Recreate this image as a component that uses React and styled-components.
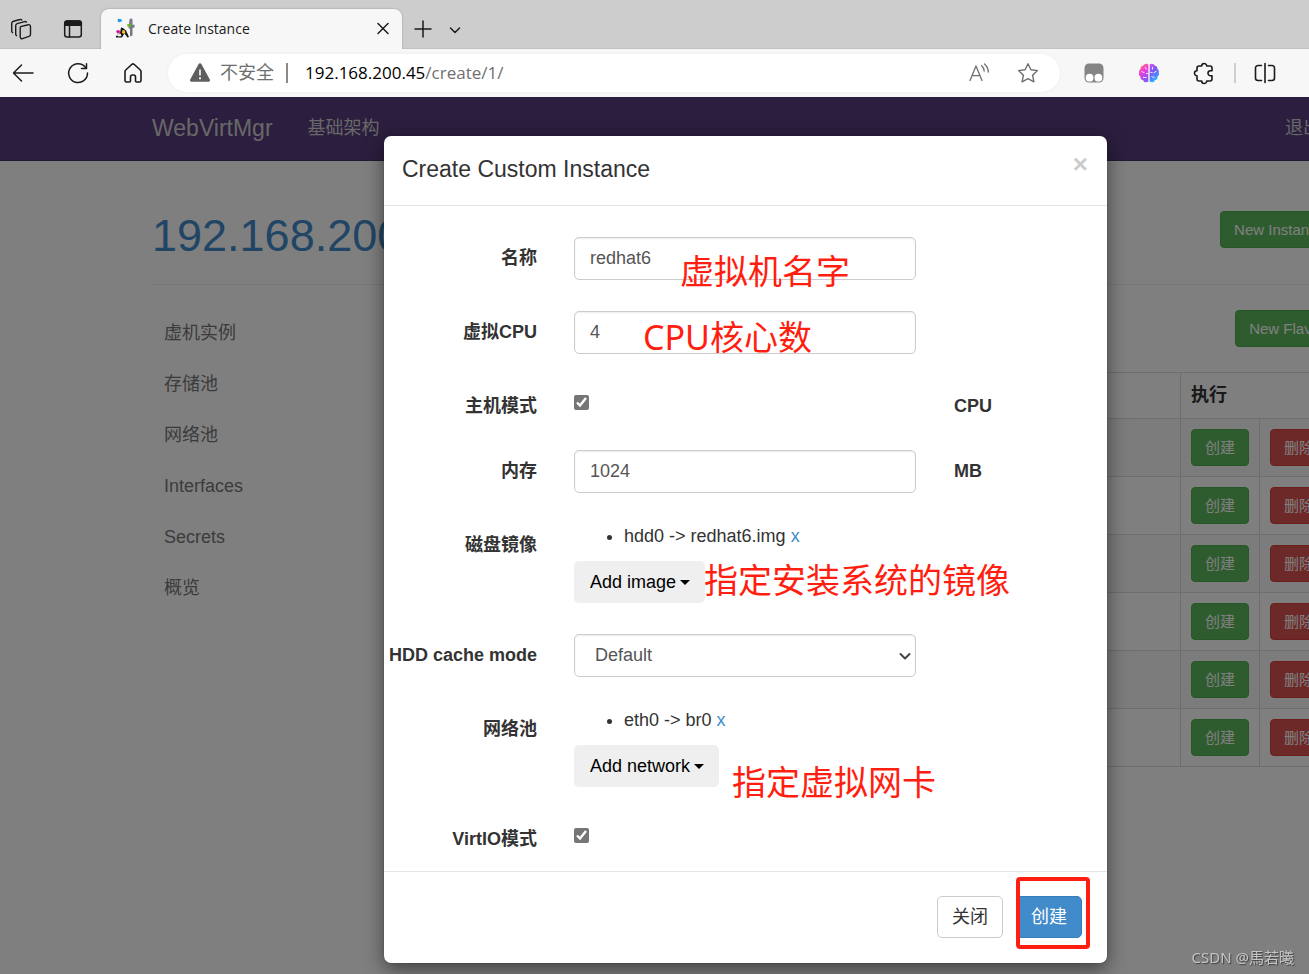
import React from "react";
import styled, { createGlobalStyle, css } from "styled-components";

const GlobalStyle = createGlobalStyle`
  *, *::before, *::after { box-sizing: border-box; }
  body {
    margin: 0;
    font-family: "Liberation Sans", "Noto Sans CJK SC", sans-serif;
    font-size: 18px;
    line-height: 25px;
    color: #333;
    background: #fff;
  }
  button, input, select { font: inherit; margin: 0; }
  a { color: #428bca; text-decoration: none; }
`;

const BLEED = "182px";

const Window = styled.div`
  min-height: 100vh;
  display: flex;
  flex-direction: column;
  overflow: hidden;
`;

/* ---------- browser chrome ---------- */

const uiFont = css`
  font-family: "Open Sans", "Noto Sans CJK SC", sans-serif;
`;

const TabStrip = styled.div`
  ${uiFont}
  height: 49px;
  display: flex;
  align-items: flex-end;
  background: #cdcdcd;
  border-bottom: 1px solid #c2c2c2;
`;

const IconButton = styled.button`
  width: 24px;
  height: 24px;
  padding: 0;
  border: 0;
  background: none;
  color: ${(p) => p.$color || "#1b1b1b"};
  display: flex;
  align-items: center;
  justify-content: center;
  flex: none;
  svg { display: block; }
`;

const StripTools = styled.div`
  display: flex;
  align-items: center;
  gap: ${(p) => p.$gap}px;
  height: 39px;
  padding-left: ${(p) => p.$pad}px;
`;

const Tab = styled.div`
  width: 301px;
  height: 40px;
  margin: 0 0 -1px 16px;
  padding: 0 7px 2px 14px;
  display: flex;
  align-items: center;
  gap: 13px;
  background: #f7f7f7;
  border-radius: 8px 8px 0 0;
  box-shadow: 0 0 2px rgba(0, 0, 0, 0.3);
  clip-path: inset(-4px -4px 0 -4px);
  font-size: 14px;
  color: #1b1b1b;
`;

const TabTitle = styled.span`
  flex: 1;
`;

const Toolbar = styled.div`
  ${uiFont}
  height: 48px;
  display: flex;
  align-items: center;
  padding: 0 32px 0 11px;
  background: #f7f7f7;
`;

const ToolGroup = styled.div`
  display: flex;
  align-items: center;
  gap: 31px;
`;

const AddressBar = styled.div`
  flex: 1;
  height: 38px;
  margin: 0 22px 0 23px;
  padding: 0 20px 1px 20px;
  display: flex;
  align-items: center;
  background: #fff;
  border-radius: 19px;
  box-shadow: 0 0 3px rgba(0, 0, 0, 0.06);
  font-size: 17px;
  color: #6f6f6f;
`;

const Security = styled.span`
  font-size: 18px;
  margin-left: 8px;
`;

const Divider = styled.span`
  width: 2px;
  height: 20px;
  background: ${(p) => p.$color};
  margin: 0 ${(p) => p.$right}px 0 ${(p) => p.$left}px;
`;

const Url = styled.span`
  flex: 1;
  b { font-weight: 400; color: #000; }
`;

const AddressTools = styled.div`
  display: flex;
  gap: 25px;
`;

/* ---------- page ---------- */

const Viewport = styled.div`
  flex: 1;
  display: grid;
  grid-template-columns: calc(100% + ${BLEED});
  overflow: hidden;
`;

const Page = styled.div`
  grid-area: 1 / 1;
  background: #fff;
`;

const Backdrop = styled.div`
  grid-area: 1 / 1;
  z-index: 1;
  background: rgba(0, 0, 0, 0.5);
`;

const Navbar = styled.nav`
  height: 64px;
  padding: 0 170px 0 152px;
  display: flex;
  align-items: center;
  background: #563d7c;
  border-bottom: 1px solid #463265;
`;

const Brand = styled.a`
  font-size: 23px;
  color: #d0d0d0;
  margin-right: 35px;
`;

const NavLink = styled.a`
  color: #d0d0d0;
  margin-left: ${(p) => (p.$end ? "auto" : "0")};
`;

const Container = styled.div`
  padding: 50px 152px 0;
`;

const PageHeader = styled.header`
  display: flex;
  justify-content: space-between;
  align-items: flex-start;
  padding-bottom: 23px;
  border-bottom: 1px solid #eee;
`;

const PageTitle = styled.h1`
  margin: 0;
  font-size: 45px;
  line-height: 50px;
  font-weight: 400;
`;

const SmallButton = styled.button`
  height: 37px;
  padding: 0 13px;
  border: 1px solid ${(p) => (p.$danger ? "#d43f3a" : "#4cae4c")};
  border-radius: 4px;
  background: ${(p) => (p.$danger ? "#d9534f" : "#5cb85c")};
  color: #fff;
  font-size: 15px;
  line-height: 22px;
  white-space: nowrap;
  display: block;
`;

const Columns = styled.div`
  display: grid;
  grid-template-columns: 1fr 3fr;
  gap: 38px;
  padding-top: 23px;
`;

const Sidebar = styled.ul`
  list-style: none;
  margin: 0;
  padding: 0;
`;

const SidebarLink = styled.a`
  display: block;
  padding: 13px 12px;
  color: #777;
`;

const Main = styled.main`
  padding-top: 2px;
  display: flex;
  flex-direction: column;
  align-items: flex-end;
  gap: 25px;
`;

const FlavorTable = styled.table`
  width: 100%;
  border-collapse: collapse;
  th, td {
    border: 1px solid #ddd;
    padding: 10px;
    text-align: left;
  }
  td:nth-last-child(-n + 2) { width: 78px; }
  tbody tr:nth-child(odd) td { background: #f9f9f9; }
`;

/* ---------- modal ---------- */

const ModalLayer = styled.div`
  grid-area: 1 / 1;
  z-index: 2;
  padding: 39px 0 11px;
  display: flex;
  justify-content: center;
  align-items: flex-start;
`;

const Modal = styled.section`
  position: relative;
  width: 723px;
  background: #fff;
  border-radius: 7px;
  box-shadow: 0 6px 19px rgba(0, 0, 0, 0.5), 0 0 1px rgba(0, 0, 0, 0.6);
`;

const ModalHeader = styled.header`
  display: flex;
  justify-content: space-between;
  align-items: flex-start;
  height: 70px;
  padding: 16px 19px 0 18px;
  border-bottom: 1px solid #e5e5e5;
`;

const ModalTitle = styled.h2`
  margin: 0;
  font-size: 23px;
  line-height: 34px;
  font-weight: 400;
`;

const Close = styled.button`
  padding: 0;
  border: 0;
  background: none;
  font-size: 26px;
  line-height: 24px;
  font-weight: 700;
  color: #ccc;
`;

const Form = styled.form`
  display: flex;
  flex-direction: column;
  gap: 31px;
  padding: 31px 0 19px;
`;

const Row = styled.div`
  display: grid;
  grid-template-columns: 153px 342px 1fr;
  column-gap: 37px;
  align-items: start;
`;

const labelText = css`
  font-weight: 700;
  padding-top: 9px;
  white-space: nowrap;
`;

const Label = styled.label`
  ${labelText}
  justify-self: end;
`;

const Suffix = styled.span`
  ${labelText}
  padding-left: 1px;
`;

const field = css`
  width: 100%;
  height: 43px;
  border: 1px solid #ccc;
  border-radius: 5px;
  background-color: #fff;
  color: #555;
  box-shadow: inset 0 1px 2px rgba(0, 0, 0, 0.08);
`;

const TextInput = styled.input`
  ${field}
  padding: 0 15px;
`;

const SelectBox = styled.div`
  position: relative;
  color: #444;
  svg {
    position: absolute;
    top: 10px;
    right: -1px;
    pointer-events: none;
  }
`;

const Select = styled.select`
  ${field}
  appearance: none;
  display: block;
  padding: 0 32px 0 20px;
`;

const Check = styled.input`
  display: block;
  width: 15px;
  height: 15px;
  margin: 10px 0 0;
  accent-color: #767676;
`;

const ItemList = styled.ul`
  margin: 0 0 12px;
  padding-left: 50px;
`;

const DropButton = styled.button`
  height: 42px;
  padding: 0 15px 0 16px;
  border: 0;
  border-radius: 5px;
  background: #efefef;
  color: #000;
  display: flex;
  align-items: center;
  gap: 4px;
`;

const Caret = styled.span`
  border: 5px solid transparent;
  border-top-color: currentColor;
  border-bottom: 0;
`;

const ModalFooter = styled.footer`
  display: flex;
  justify-content: flex-end;
  gap: 13px;
  padding: 24px 25px 25px;
  border-top: 1px solid #e5e5e5;
`;

const FooterButton = styled.button`
  height: 42px;
  padding: 0 14px;
  border: 1px solid ${(p) => (p.$primary ? "#357ebd" : "#ccc")};
  border-radius: 5px;
  background: ${(p) => (p.$primary ? "#428bca" : "#fff")};
  color: ${(p) => (p.$primary ? "#fff" : "#333")};
`;

/* red callouts drawn over the dialog */
const Note = styled.span`
  position: absolute;
  left: ${(p) => p.$x}px;
  top: ${(p) => p.$y}px;
  font-family: "Noto Sans", "Noto Sans CJK SC", sans-serif;
  font-size: 34px;
  line-height: 40px;
  color: #ff1e10;
  white-space: nowrap;
  pointer-events: none;
`;

const Highlight = styled.span`
  position: absolute;
  right: 17px;
  bottom: 14px;
  width: 74px;
  height: 72px;
  border: 4px solid #ff1e10;
  border-radius: 4px;
  pointer-events: none;
`;

const Watermark = styled.span`
  position: fixed;
  right: 15px;
  bottom: 6px;
  z-index: 3;
  font-family: "Noto Sans", "Noto Sans CJK TC", sans-serif;
  font-size: 15px;
  line-height: 22px;
  color: #c4c4c4;
  text-shadow: 1px 1px 1px rgba(0, 0, 0, 0.5);
`;

/* ---------- icons ---------- */

const Svg = ({ size = 24, w = 1.5, children }) => (
  <svg
    width={size}
    height={size}
    viewBox={`0 0 ${size} ${size}`}
    fill="none"
    stroke="currentColor"
    strokeWidth={w}
    strokeLinecap="round"
    strokeLinejoin="round"
    aria-hidden="true"
  >
    {children}
  </svg>
);

const WorkspacesIcon = () => (
  <Svg w={1.4}>
    <path d="M11.6 9.6l7.6-1.9a1.8 1.8 0 0 1 2.3 1.8v8a2 2 0 0 1-1.5 1.9l-6.500 2.200a1.800 1.800 0 0 1-2.300-1.700v-8.500a1.900 1.900 0 0 1 .4-1.800z" />
    <path d="M7.500 18.600a1.700 1.700 0 0 1-.8-1.500V8.500a2 2 0 0 1 1.500-1.900l7.500-2a1.800 1.800 0 0 1 1.700.500" />
    <path d="M3.600 15.600a1.700 1.700 0 0 1-.9-1.500V6.600a2.400 2.400 0 0 1 1.800-2.300l6.500-1.800a1.800 1.800 0 0 1 1.800.4" />
  </Svg>
);

const VerticalTabsIcon = () => (
  <Svg w={1.5}>
    <rect x="3.700" y="4" width="16.600" height="16" rx="2.500" />
    <path d="M3.700 8.200V6.500A2.500 2.500 0 0 1 6.200 4h11.600a2.500 2.500 0 0 1 2.500 2.500v1.700z" fill="currentColor" />
    <path d="M8.500 8.500V20" />
  </Svg>
);

const Favicon = () => (
  <svg width="20" height="20" viewBox="0 0 20 20" aria-hidden="true">
    <path d="M14.500 1.500c1-1.500 3-1 3 .5v5l2-.5v3l-2 .5v7.500l-2.500 1V11l-1.500-1z" fill="#777986" />
    <path d="M3 .8l3.500.4.5 2-3 1-1.500-1z" fill="#1b9bea" />
    <path d="M12 6.500l2.500-1L16 7l-1 2-2.500-.5z" fill="#66bd17" />
    <path d="M6 9.500l2 .5 3 2.500L14 19l-1.500.5-3-4-1 1.500-1.500 2.500H1V18l4-3z" fill="#171717" />
    <path d="M1.500 17l4-1.500 1 2.500-3 .5z" fill="#f7f7f7" />
    <path d="M7.500 12l2 .2 1 2.300-1.500 1.500-2-1z" fill="#ffc928" />
    <path d="M1 13l2-1 2 .8-.3 2.200-2.500.5z" fill="#e0118d" />
  </svg>
);

const CrossIcon = () => (
  <Svg><path d="M7 7.500l10 10M17 7.500l-10 10" /></Svg>
);
const PlusIcon = () => (
  <Svg><path d="M12 4v16M4 12h16" /></Svg>
);
const ChevronIcon = () => (
  <Svg><path d="M7.500 11l4.500 4.500 4.500-4.500" /></Svg>
);
const SelectChevron = () => (
  <Svg w={2}><path d="M7.500 10l4.500 4.500 4.500-4.500" /></Svg>
);
const BackIcon = () => (
  <Svg><path d="M22 12H3M10.500 4L2.500 12l8 8" /></Svg>
);
const ReloadIcon = () => (
  <Svg>
    <path d="M19.600 6.500A9.400 9.400 0 1 0 21.500 12" />
    <path d="M20.500 2.800v4.700h-5" />
  </Svg>
);
const HomeIcon = () => (
  <Svg w={1.6}>
    <path d="M4 10.500a2 2 0 0 1 .7-1.500l6-5.500a2 2 0 0 1 2.600 0l6 5.500a2 2 0 0 1 .7 1.500V19.500a1.500 1.500 0 0 1-1.500 1.500H15.500a1 1 0 0 1-1-1v-4a2 2 0 0 0-2-2h-1a2 2 0 0 0-2 2v4a1 1 0 0 1-1 1H5.500A1.500 1.500 0 0 1 4 19.500z" />
  </Svg>
);
const WarningIcon = () => (
  <svg width="24" height="24" viewBox="0 0 24 24" aria-hidden="true">
    <path d="M10.500 3.200a1.700 1.700 0 0 1 3 0l8.300 15.300a1.500 1.500 0 0 1-1.300 2.300h-17a1.500 1.500 0 0 1-1.300-2.300z" fill="#5f5f5f" />
    <path d="M12 8.500v6" stroke="#fff" strokeWidth="1.600" />
    <circle cx="12" cy="17.300" r="1.100" fill="#fff" />
  </svg>
);
const ReadAloudIcon = () => (
  <Svg w={1.3}>
    <path d="M3 19.500L9 5l6 14.500M5 14.700h8" />
    <path d="M14.500 4.500c1.700 1.500 2.600 3.300 2.700 5.500M17.500 3c2.300 2 3.700 4.700 3.800 8" />
  </Svg>
);
const StarIcon = () => (
  <Svg w={1.4}>
    <path d="M12 2.700l2.900 6.100 6.600.8-4.900 4.600 1.300 6.700-5.900-3.300-5.900 3.300 1.300-6.700L2.500 9.600l6.600-.8z" />
  </Svg>
);
const MonkeyIcon = () => (
  <svg width="24" height="24" viewBox="0 0 24 24" aria-hidden="true">
    <rect x="2.500" y="2.500" width="19" height="19" rx="4.500" fill="#858585" />
    <circle cx="7.600" cy="16.700" r="3.900" fill="#fff" />
    <circle cx="16.400" cy="16.700" r="3.900" fill="#fff" />
  </svg>
);
const BrainIcon = () => (
  <svg width="24" height="24" viewBox="0 0 24 24" aria-hidden="true">
    <defs>
      <linearGradient id="brainLeft" x1="0" y1="0" x2="0.4" y2="1">
        <stop offset="0" stopColor="#ff9b3d" />
        <stop offset="0.450" stopColor="#f73bd0" />
        <stop offset="1" stopColor="#8a55ff" />
      </linearGradient>
      <linearGradient id="brainRight" x1="0" y1="0" x2="0.4" y2="1">
        <stop offset="0" stopColor="#d455ed" />
        <stop offset="0.500" stopColor="#7658f5" />
        <stop offset="1" stopColor="#2cb3ff" />
      </linearGradient>
    </defs>
    <path d="M11.300 3.500v17c-2 1.500-4.700.8-5.200-1.500-2 0-3-1.600-2.500-3.300C2 14.500 1.500 12.800 2.300 11.500c-.5-1.500 0-2.600 1.200-3.300C3.300 6 4.500 4.700 6 4.700 7 2.600 9.700 2 11.300 3.500z" fill="url(#brainLeft)" />
    <path d="M12.700 3.500v17c2 1.500 4.700.8 5.200-1.500 2 0 3-1.600 2.500-3.300 1.600-1.200 2.100-2.900 1.300-4.200.5-1.500 0-2.600-1.200-3.300.2-2.200-1-3.500-2.500-3.500-1-2.100-3.700-2.700-5.300-1.200z" fill="url(#brainRight)" />
    <path d="M4.500 10.500l3 1.300M8 6l1.500 2.500M6 16.500h3.500M9 12.500h2M19.500 10l-3 2M15.500 6v2.500M14.500 15.500l3 1M13.500 11.500h2" stroke="#f7e8ff" strokeWidth="1" fill="none" />
  </svg>
);
const PuzzleIcon = () => (
  <Svg w={1.6}>
    <path d="M7 5h2.700a2.500 2.500 0 0 1 5 0H18a2 2 0 0 1 2 2v2.700h-1.500a2.500 2.500 0 0 0 0 5H20V18a2 2 0 0 1-2 2h-3.300a2.500 2.500 0 0 1-5 0H7a2 2 0 0 1-2-2v-3.300a2.500 2.500 0 0 1 0-5V7a2 2 0 0 1 2-2z" />
  </Svg>
);
const SplitIcon = () => (
  <Svg w={1.6}>
    <path d="M8.500 4.500H5A2.500 2.500 0 0 0 2.500 7v10A2.500 2.500 0 0 0 5 19.500h3.500M15.500 4.500H19A2.500 2.500 0 0 1 21.500 7v10a2.500 2.500 0 0 1-2.500 2.500h-3.500M12 2.500v19" />
  </Svg>
);

/* ---------- composition ---------- */

const sections = ["虚机实例", "存储池", "网络池", "Interfaces", "Secrets", "概览"];
const flavors = [1, 2, 3, 4, 5, 6];

const Browser = () => (
  <>
    <TabStrip>
      <StripTools $gap={28} $pad={9}>
        <IconButton aria-label="Workspaces"><WorkspacesIcon /></IconButton>
        <IconButton aria-label="Tab actions"><VerticalTabsIcon /></IconButton>
      </StripTools>
      <Tab>
        <Favicon />
        <TabTitle>Create Instance</TabTitle>
        <IconButton aria-label="Close tab"><CrossIcon /></IconButton>
      </Tab>
      <StripTools $gap={8} $pad={9}>
        <IconButton aria-label="New tab"><PlusIcon /></IconButton>
        <IconButton aria-label="Tab list"><ChevronIcon /></IconButton>
      </StripTools>
    </TabStrip>
    <Toolbar>
      <ToolGroup>
        <IconButton aria-label="Back"><BackIcon /></IconButton>
        <IconButton aria-label="Reload"><ReloadIcon /></IconButton>
        <IconButton aria-label="Home"><HomeIcon /></IconButton>
      </ToolGroup>
      <AddressBar>
        <WarningIcon />
        <Security>不安全</Security>
        <Divider $color="#8a8a8a" $left={12} $right={17} />
        <Url><b>192.168.200.45</b>/create/1/</Url>
        <AddressTools>
          <IconButton $color="#6f6f6f" aria-label="Read aloud"><ReadAloudIcon /></IconButton>
          <IconButton $color="#6f6f6f" aria-label="Favorite"><StarIcon /></IconButton>
        </AddressTools>
      </AddressBar>
      <ToolGroup>
        <IconButton aria-label="Scripts"><MonkeyIcon /></IconButton>
        <IconButton aria-label="Assistant"><BrainIcon /></IconButton>
        <IconButton aria-label="Extensions"><PuzzleIcon /></IconButton>
      </ToolGroup>
      <Divider $color="#cfcfcf" $left={18} $right={17} />
      <IconButton aria-label="Split screen"><SplitIcon /></IconButton>
    </Toolbar>
  </>
);

const HostPage = () => (
  <Page>
    <Navbar>
      <Brand href="#">WebVirtMgr</Brand>
      <NavLink href="#">基础架构</NavLink>
      <NavLink href="#" $end>退出</NavLink>
    </Navbar>
    <Container>
      <PageHeader>
        <PageTitle><a href="#">192.168.200.45</a></PageTitle>
        <SmallButton>New Instance</SmallButton>
      </PageHeader>
      <Columns>
        <Sidebar>
          {sections.map((s) => (
            <li key={s}><SidebarLink href="#">{s}</SidebarLink></li>
          ))}
        </Sidebar>
        <Main>
          <SmallButton>New Flavor</SmallButton>
          <FlavorTable>
            <thead>
              <tr><th /><th colSpan={2}>执行</th></tr>
            </thead>
            <tbody>
              {flavors.map((id) => (
                <tr key={id}>
                  <td />
                  <td><SmallButton>创建</SmallButton></td>
                  <td><SmallButton $danger>删除</SmallButton></td>
                </tr>
              ))}
            </tbody>
          </FlavorTable>
        </Main>
      </Columns>
    </Container>
  </Page>
);

const Devices = ({ id, item, action }) => (
  <div>
    <ItemList>
      <li>{item} <a href="#">x</a></li>
    </ItemList>
    <DropButton id={id} type="button">{action}<Caret /></DropButton>
  </div>
);

const CreateDialog = () => (
  <Modal role="dialog" aria-labelledby="dialog-title">
    <ModalHeader>
      <ModalTitle id="dialog-title">Create Custom Instance</ModalTitle>
      <Close type="button" aria-label="Close">×</Close>
    </ModalHeader>
    <Form id="create-form">
      <Row>
        <Label htmlFor="name">名称</Label>
        <TextInput id="name" defaultValue="redhat6" />
      </Row>
      <Row>
        <Label htmlFor="vcpu">虚拟CPU</Label>
        <TextInput id="vcpu" defaultValue="4" />
      </Row>
      <Row>
        <Label htmlFor="host-model">主机模式</Label>
        <Check id="host-model" type="checkbox" defaultChecked />
        <Suffix>CPU</Suffix>
      </Row>
      <Row>
        <Label htmlFor="memory">内存</Label>
        <TextInput id="memory" defaultValue="1024" />
        <Suffix>MB</Suffix>
      </Row>
      <Row>
        <Label htmlFor="images">磁盘镜像</Label>
        <Devices id="images" item="hdd0 -> redhat6.img" action="Add image" />
      </Row>
      <Row>
        <Label htmlFor="cache">HDD cache mode</Label>
        <SelectBox>
          <Select id="cache" defaultValue="default">
            <option value="default">Default</option>
          </Select>
          <SelectChevron />
        </SelectBox>
      </Row>
      <Row>
        <Label htmlFor="networks">网络池</Label>
        <Devices id="networks" item="eth0 -> br0" action="Add network" />
      </Row>
      <Row>
        <Label htmlFor="virtio">VirtIO模式</Label>
        <Check id="virtio" type="checkbox" defaultChecked />
      </Row>
    </Form>
    <ModalFooter>
      <FooterButton type="button">关闭</FooterButton>
      <FooterButton type="submit" form="create-form" $primary>创建</FooterButton>
    </ModalFooter>
    <Note $x={296} $y={115}>虚拟机名字</Note>
    <Note $x={259} $y={181}>CPU核心数</Note>
    <Note $x={320} $y={424}>指定安装系统的镜像</Note>
    <Note $x={348} $y={626}>指定虚拟网卡</Note>
    <Highlight />
  </Modal>
);

export default function App() {
  return (
    <Window>
      <GlobalStyle />
      <Browser />
      <Viewport>
        <HostPage />
        <Backdrop />
        <ModalLayer>
          <CreateDialog />
        </ModalLayer>
      </Viewport>
      <Watermark>CSDN @馬若曦</Watermark>
    </Window>
  );
}
